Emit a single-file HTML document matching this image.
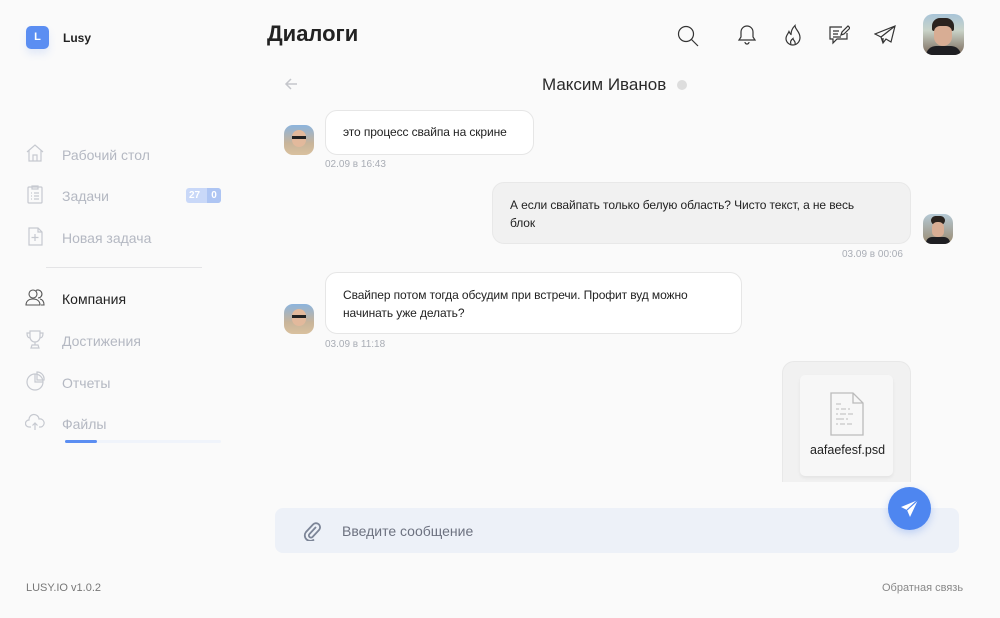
<!DOCTYPE html>
<html><head><meta charset="utf-8"><style>
*{margin:0;padding:0;box-sizing:border-box}
body{width:1000px;height:618px;background:#fafafa;font-family:"Liberation Sans",sans-serif;position:relative;overflow:hidden;color:#222}
.a{position:absolute}
.nav{position:absolute;left:25px;font-size:14px;color:#b4b8c2}
.nav svg{position:absolute;left:0;top:-4px}
.nav span{position:absolute;left:37px;top:0;white-space:nowrap}
.bub{position:absolute;font-size:12px;line-height:18px;padding:0 17px;border-radius:12px;letter-spacing:-0.1px}
.in{background:#fff;border:1px solid #e6e6e6}
.out{background:#f1f1f1;border:1px solid #e8e8e8}
.time{position:absolute;font-size:10px;color:#a9adb5}
.av{position:absolute;width:30px;height:30px;border-radius:9px;overflow:hidden}
</style></head><body>
<div class="a" style="left:26px;top:26px;width:23px;height:23px;border-radius:5px;background:#5b8ef2;color:#fff;font-size:11px;font-weight:bold;text-align:center;line-height:23px;box-shadow:0 5px 8px rgba(91,142,242,.15)">L</div>
<div class="a" style="left:63px;top:31px;font-size:12px;font-weight:bold">Lusy</div>

<div class="nav" style="top:147px"><svg width="20" height="20" viewBox="0 0 20 20" fill="none" stroke="#c6c9d0" stroke-width="1.2"><path d="M2 9L10 2l8 7M4 7v11h12V7M8 18v-6h4v6"/></svg><span>Рабочий стол</span></div>
<div class="nav" style="top:188px"><svg width="20" height="20" viewBox="0 0 20 20" fill="none" stroke="#c6c9d0" stroke-width="1.2"><rect x="3" y="3" width="14" height="16" rx="1"/><path d="M7 2h6v3H7zM6 9h1M9 9h5M6 12h1M9 12h5M6 15h1M9 15h5"/></svg><span>Задачи</span></div>
<div class="a" style="left:186px;top:188px;width:35px;height:15px;border-radius:3px;background:#c9d8f8;font-size:10px;font-weight:bold;color:#fff;line-height:15px"><span style="position:absolute;left:3px">27</span><span style="position:absolute;right:0;width:14px;height:15px;background:#aec5f3;border-radius:0 3px 3px 0;text-align:center">0</span></div>
<div class="nav" style="top:230px"><svg width="20" height="20" viewBox="0 0 20 20" fill="none" stroke="#c6c9d0" stroke-width="1.2"><path d="M4 2h9l4 4v13H4zM13 2v4h4M10 8v7M6.5 11.5h7"/></svg><span>Новая задача</span></div>
<div class="a" style="left:46px;top:267px;width:156px;height:1px;background:#e4e4e6"></div>
<div class="nav" style="top:291px;color:#222"><svg width="20" height="20" viewBox="0 0 20 20" fill="none" stroke="#555" stroke-width="1.1"><circle cx="8" cy="7" r="4"/><path d="M1 18c0-4 3-6 7-6s7 2 7 6zM11 3.5a4 4 0 1 1 2 7.5M15 12c2.5.5 4 2.5 4 6h-3"/></svg><span>Компания</span></div>
<div class="nav" style="top:333px"><svg width="20" height="20" viewBox="0 0 20 20" fill="none" stroke="#c6c9d0" stroke-width="1.2"><path d="M5 2h10v6a5 5 0 0 1-10 0zM5 4H2c0 3 1 5 3 5M15 4h3c0 3-1 5-3 5M10 13v3M6 19h8l-1-3H7z"/></svg><span>Достижения</span></div>
<div class="nav" style="top:375px"><svg width="20" height="20" viewBox="0 0 20 20" fill="none" stroke="#c6c9d0" stroke-width="1.2"><circle cx="10" cy="11" r="8"/><path d="M10 3v8h8M12 1v8h7a7 7 0 0 0-7-8z"/></svg><span>Отчеты</span></div>
<div class="nav" style="top:416px"><svg width="20" height="20" viewBox="0 0 20 20" fill="none" stroke="#c6c9d0" stroke-width="1.2"><path d="M6 15H4a3.5 3.5 0 0 1 0-7 5 5 0 0 1 10-1 4 4 0 0 1 2 8h-2M10 18v-7M7.5 13.5L10 11l2.5 2.5"/></svg><span>Файлы</span></div>
<div class="a" style="left:65px;top:440px;width:156px;height:3px;background:#f0f4fb;border-radius:2px"></div>
<div class="a" style="left:65px;top:440px;width:32px;height:3px;background:#5b8ef2;border-radius:2px"></div>
<div class="a" style="left:26px;top:582px;font-size:11px;color:#777">LUSY.IO v1.0.2</div>

<div class="a" style="left:267px;top:21px;font-size:22px;font-weight:bold;color:#222">Диалоги</div>
<svg class="a" style="left:676px;top:24px" width="24" height="24" viewBox="0 0 24 24" fill="none" stroke="#333" stroke-width="1.2"><circle cx="10" cy="10" r="7.5"/><path d="M15.5 15.5L22 22"/></svg>
<svg class="a" style="left:737px;top:24px" width="20" height="22" viewBox="0 0 20 22" fill="none" stroke="#333" stroke-width="1.2"><path d="M10 2a6 6 0 0 0-6 6v5l-2 3h16l-2-3V8a6 6 0 0 0-6-6zM8 18a2 2 0 0 0 4 0"/></svg>
<svg class="a" style="left:784px;top:24px" width="18" height="22" viewBox="0 0 18 22" fill="none" stroke="#333" stroke-width="1.2"><path d="M9 21c-4 0-7-3-7-6.5 0-3 2-4.5 3-7 1 2 1.5 3 2 3 0-3 1-6 4-9 0 4 5 6 5 12 0 4-3 7.5-7 7.5zM7 20c-1-2 0-4 2-5.5 0 2 3 2.5 2 5.5"/></svg>
<svg class="a" style="left:828px;top:25px" width="22" height="20" viewBox="0 0 22 20" fill="none" stroke="#333" stroke-width="1.2"><path d="M14 2H2v12h3v4l4-4h10V8M5 6h6M5 9h5M5 12h8M13 10l1-3 6-6 2 2-6 6z"/></svg>
<svg class="a" style="left:874px;top:25px" width="22" height="20" viewBox="0 0 22 20" fill="none" stroke="#333" stroke-width="1.2"><path d="M21 1L1 9l6 3 2 6 3-4 5 3zM21 1L7 12M9 18v-5"/></svg>
<div class="a" style="left:923px;top:14px;width:41px;height:41px;border-radius:10px;overflow:hidden;background:linear-gradient(#a8c4d8 0,#c9d3c8 40%,#7b6a5c 100%)"><div class="a" style="left:9px;top:4px;width:22px;height:13px;border-radius:8px 8px 2px 2px;background:#2a231f"></div><div class="a" style="left:11px;top:12px;width:18px;height:20px;border-radius:6px 6px 9px 9px;background:#d8ad94"></div><div class="a" style="left:3px;top:32px;width:35px;height:12px;border-radius:10px 10px 0 0;background:#1e1e22"></div></div>

<svg class="a" style="left:284px;top:77px" width="14" height="14" viewBox="0 0 14 14" fill="none" stroke="#c4c6cb" stroke-width="1.5"><path d="M13 7H2M7 2L2 7l5 5"/></svg>
<div class="a" style="left:542px;top:75px;font-size:17px;color:#2a2a2a">Максим Иванов</div>
<div class="a" style="left:677px;top:80px;width:10px;height:10px;border-radius:50%;background:#ddd"></div>

<div class="av" style="left:284px;top:125px;background:linear-gradient(#8cb4dd 0,#c8b49a 60%,#d9c09e)"><div class="a" style="left:8px;top:5px;width:14px;height:17px;border-radius:7px;background:#e2b99c"></div><div class="a" style="left:8px;top:11px;width:14px;height:3px;background:#222"></div></div>
<div class="bub in" style="left:325px;top:110px;width:209px;height:45px;line-height:43px;white-space:nowrap">это процесс свайпа на скрине</div>
<div class="time" style="left:325px;top:159px">02.09 в 16:43</div>

<div class="bub out" style="left:492px;top:182px;width:419px;height:62px;padding-top:13px;padding-right:45px">А если свайпать только белую область? Чисто текст, а не весь блок</div>
<div class="av" style="left:923px;top:214px;background:linear-gradient(#b5c9d5,#9a8a70)"><div class="a" style="left:8px;top:2px;width:14px;height:9px;border-radius:6px;background:#2a231f"></div><div class="a" style="left:9px;top:8px;width:12px;height:15px;border-radius:5px;background:#d8ad94"></div><div class="a" style="left:3px;top:23px;width:24px;height:8px;background:#1e1e22;border-radius:6px 6px 0 0"></div></div>
<div class="time" style="left:842px;top:249px">03.09 в 00:06</div>

<div class="av" style="left:284px;top:304px;background:linear-gradient(#8cb4dd 0,#c8b49a 60%,#d9c09e)"><div class="a" style="left:8px;top:5px;width:14px;height:17px;border-radius:7px;background:#e2b99c"></div><div class="a" style="left:8px;top:11px;width:14px;height:3px;background:#222"></div></div>
<div class="bub in" style="left:325px;top:272px;width:417px;height:62px;padding-top:13px">Свайпер потом тогда обсудим при встречи. Профит вуд можно начинать уже делать?</div>
<div class="time" style="left:325px;top:339px">03.09 в 11:18</div>

<div class="a" style="left:782px;top:361px;width:129px;height:121px;background:#f1f1f1;border-radius:12px 12px 0 0;border:1px solid #e8e8e8;border-bottom:none"></div>
<div class="a" style="left:800px;top:375px;width:93px;height:101px;background:#f7f7f7;border-radius:5px;box-shadow:0 2px 3px rgba(0,0,0,.06)"></div>
<svg class="a" style="left:829px;top:391px" width="36" height="45" viewBox="0 0 36 45" fill="none" stroke="#bbb" stroke-width="1.3"><path d="M2 2h22l10 10v32H2zM24 2v10h10"/><path d="M7 13h5M7 18h3M12 18h5M19 18h2M7 23h2M11 23h6M19 23h5M7 28h8M17 28h2M7 33h2M11 33h5M18 33h5" stroke-width="1"/></svg>
<div class="a" style="left:810px;top:443px;font-size:12.5px;color:#222">aafaefesf.psd</div>

<div class="a" style="left:275px;top:508px;width:684px;height:45px;background:#edf1f8;border-radius:8px"></div>
<svg class="a" style="left:303px;top:521px" width="18" height="20" viewBox="0 0 18 20" fill="none" stroke="#7c8597" stroke-width="1.8"><path d="M13 6l-6.5 7a2 2 0 0 0 3 3L16 9a4 4 0 0 0-6-5.5L3 11a5.5 5.5 0 0 0 8 7.5"/></svg>
<div class="a" style="left:342px;top:523px;font-size:14px;color:#6d7280">Введите сообщение</div>
<div class="a" style="left:888px;top:487px;width:43px;height:43px;border-radius:50%;background:#4e86f0;box-shadow:0 3px 8px rgba(78,134,240,.3)"></div>
<svg class="a" style="left:900px;top:499px" width="19" height="19" viewBox="0 0 19 19"><path d="M18 1L1 8l6 3 3 7z" fill="#fff"/><path d="M18 1L7 11" stroke="#4e86f0" stroke-width="1.2"/></svg>

<div class="a" style="left:882px;top:582px;font-size:11px;color:#888">Обратная связь</div>
</body></html>
